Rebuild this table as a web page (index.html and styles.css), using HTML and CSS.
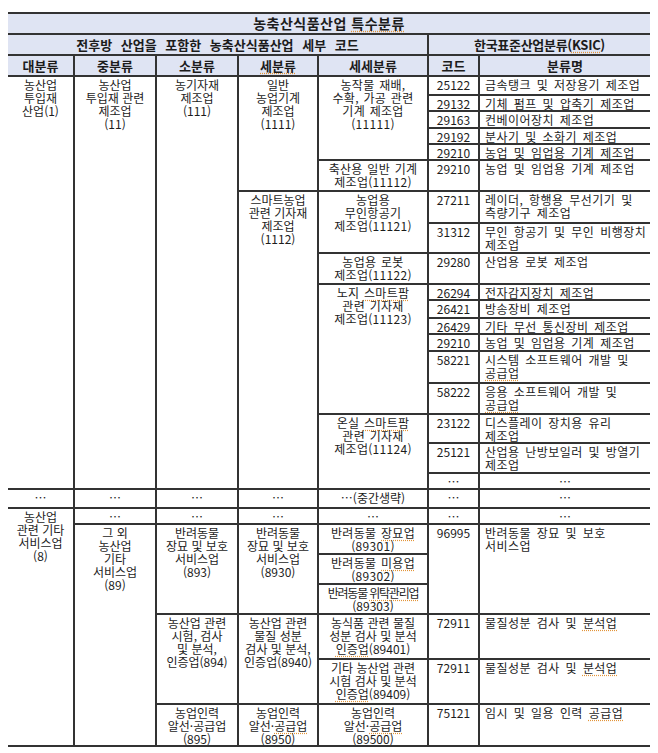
FILE: index.html
```html
<!DOCTYPE html>
<html lang="ko">
<head>
<meta charset="utf-8">
<title>농축산식품산업 특수분류</title>
<link rel="stylesheet" href="styles.css">
</head>
<body>
<table class="tbl">
  <colgroup>
    <col class="w1"><col class="w2"><col class="w3"><col class="w4"><col class="w5"><col class="w6"><col class="w7">
  </colgroup>
  <thead>
    <tr class="hr"><th colspan="7" class="title">농축산식품산업 <span class="sp">특수분류</span></th></tr>
    <tr class="hr"><th colspan="5" class="hd2">전후방 산업을 포함한 농축산식품산업 세부 코드</th><th colspan="2" class="hd2b">한국표준산업분류(<span class="sp">KSIC</span>)</th></tr>
    <tr class="hr hd3"><th>대분류</th><th>중분류</th><th>소분류</th><th><span class="sp">세분류</span></th><th>세세분류</th><th>코드</th><th>분류명</th></tr>
  </thead>
  <tbody>
    <tr class="h19">
      <td rowspan="18">농산업<br>투입재<br>산업(1)</td>
      <td rowspan="18">농산업<br>투입재 관련<br>제조업<br>(11)</td>
      <td rowspan="18">농기자재<br>제조업<br>(111)</td>
      <td rowspan="6">일반<br>농업기계<br>제조업<br>(1111)</td>
      <td rowspan="5" class="sub">농작물 재배,<br>수확, 가공 관련<br>기계 제조업<br>(11111)</td>
      <td class="code">25122</td><td class="name">금속탱크 및 저장용기 제조업</td>
    </tr>
    <tr class="h16"><td class="code">29132</td><td class="name">기체 펌프 및 압축기 제조업</td></tr>
    <tr class="h17"><td class="code">29163</td><td class="name">컨베이어장치 제조업</td></tr>
    <tr class="h16"><td class="code">29192</td><td class="name">분사기 및 소화기 제조업</td></tr>
    <tr class="h16"><td class="code">29210</td><td class="name">농업 및 임업용 기계 제조업</td></tr>
    <tr class="h31">
      <td class="sub">축산용 일반 기계<br>제조업(11112)</td>
      <td class="code">29210</td><td class="name">농업 및 임업용 기계 제조업</td>
    </tr>
    <tr class="h32">
      <td rowspan="12">스마트농업<br>관련 기자재<br>제조업<br>(1112)</td>
      <td rowspan="2" class="sub">농업용<br>무인항공기<br>제조업(11121)</td>
      <td class="code">27211</td><td class="name">레이더, 항행용 무선기기 및<br>측량기구 제조업</td>
    </tr>
    <tr class="h30"><td class="code">31312</td><td class="name">무인 항공기 및 무인 비행장치<br>제조업</td></tr>
    <tr class="h31">
      <td class="sub">농업용 로봇<br>제조업(11122)</td>
      <td class="code">29280</td><td class="name">산업용 로봇 제조업</td>
    </tr>
    <tr class="h16">
      <td rowspan="6" class="sub">노지 <span class="sp">스마트팜</span><br>관련 기자재<br>제조업(11123)</td>
      <td class="code">26294</td><td class="name">전자감지장치 제조업</td>
    </tr>
    <tr class="h18"><td class="code">26421</td><td class="name">방송장비 제조업</td></tr>
    <tr class="h16"><td class="code">26429</td><td class="name">기타 무선 통신장비 제조업</td></tr>
    <tr class="h17"><td class="code">29210</td><td class="name">농업 및 임업용 기계 제조업</td></tr>
    <tr class="h32"><td class="code">58221</td><td class="name">시스템 소프트웨어 개발 및<br><span class="sp">공급업</span></td></tr>
    <tr class="h31"><td class="code">58222</td><td class="name">응용 소프트웨어 개발 및<br><span class="sp">공급업</span></td></tr>
    <tr class="h29">
      <td rowspan="3" class="sub">온실 <span class="sp">스마트팜</span><br>관련 기자재<br>제조업(11124)</td>
      <td class="code">23122</td><td class="name">디스플레이 장치용 유리<br>제조업</td>
    </tr>
    <tr class="h30"><td class="code">25121</td><td class="name">산업용 난방보일러 및 방열기<br>제조업</td></tr>
    <tr class="h16"><td class="code">…</td><td class="code">…</td></tr>
    <tr class="h19 sect">
      <td>…</td><td>…</td><td>…</td><td>…</td><td>…(중간생략)</td><td class="code">…</td><td class="code">…</td>
    </tr>
    <tr class="h16">
      <td rowspan="7">농산업<br>관련 기타<br>서비스업<br>(8)</td>
      <td>…</td><td>…</td><td>…</td><td>…</td><td class="code">…</td><td class="code">…</td>
    </tr>
    <tr class="h30">
      <td rowspan="6">그 외<br>농산업<br>기타<br>서비스업<br>(89)</td>
      <td rowspan="3">반려동물<br>장묘 및 보호<br>서비스업<br>(893)</td>
      <td rowspan="3">반려동물<br>장묘 및 보호<br>서비스업<br>(8930)</td>
      <td class="sub">반려동물 <span class="sp">장묘업</span><br>(89301)</td>
      <td rowspan="3" class="code">96995</td>
      <td rowspan="3" class="name">반려동물 장묘 및 보호<br>서비스업</td>
    </tr>
    <tr class="h30"><td class="sub">반려동물 <span class="sp">미용업</span><br>(89302)</td></tr>
    <tr class="h30"><td><span class="tight">반려동물 <span class="sp">위탁관리업</span></span><br>(89303)</td></tr>
    <tr class="h45">
      <td rowspan="2">농산업 관련<br>시험, 검사<br>및 분석,<br>인증업(894)</td>
      <td rowspan="2">농산업 관련<br>물질 성분<br>검사 및 분석,<br>인증업(8940)</td>
      <td>농식품 관련 물질<br>성분 검사 및 분석<br><span class="sp">인증업</span>(89401)</td>
      <td class="code">72911</td><td class="name">물질성분 검사 및 <span class="sp">분석업</span></td>
    </tr>
    <tr class="h45">
      <td>기타 농산업 관련<br>시험 검사 및 분석<br><span class="sp">인증업</span>(89409)</td>
      <td class="code">72911</td><td class="name">물질성분 검사 및 <span class="sp">분석업</span></td>
    </tr>
    <tr class="h42">
      <td>농업인력<br>알선·공급업<br>(895)</td>
      <td>농업인력<br>알선·<span class="sp">공급업</span><br>(8950)</td>
      <td>농업인력<br>알선·<span class="sp">공급업</span><br>(89500)</td>
      <td class="code">75121</td><td class="name">임시 및 일용 인력 <span class="sp">공급업</span></td>
    </tr>
  </tbody>
</table>
</body>
</html>
```

FILE: styles.css
```css
body {
  margin: 12px 8px 0;
  background: #ffffff;
  color: #1c1c1c;
  font-family: "Noto Sans CJK KR", "Noto Sans", sans-serif;
}

.tbl {
  width: 642px;
  border-collapse: collapse;
  table-layout: fixed;
  font-size: 12px;
  line-height: 13px;
  border-top: 2px solid #222;
  border-bottom: 2px solid #222;
  border-left: hidden;
  border-right: hidden;
}

.w1 { width: 66px; }
.w2 { width: 82px; }
.w3 { width: 82px; }
.w4 { width: 80px; }
.w5 { width: 110px; }
.w6 { width: 51px; }
.w7 { width: 171px; }

.tbl td,
.tbl th {
  border: 2px solid #333;
  padding: 1px 1px 0;
  vertical-align: top;
  text-align: center;
  overflow: hidden;
  white-space: nowrap;
}

.tbl th {
  background: #dfe4f3;
  font-weight: bold;
  vertical-align: middle;
  padding: 0;
}

.hr { height: 21px; }

.title { font-size: 14px; letter-spacing: 0.5px; }
.hd2 { font-size: 13px; word-spacing: 5px; }
.hd2b { font-size: 13px; letter-spacing: -0.3px; }
.hd3 th { font-size: 13px; }

.code { text-align: center; }
.tbl td.name {
  text-align: left;
  padding-left: 5px;
  letter-spacing: 0.45px;
  word-spacing: 2px;
}
.tbl td.sub { letter-spacing: 0.3px; word-spacing: 1px; }

.tight { letter-spacing: -1.2px; }

.sect td { border-top-width: 2px; border-bottom-width: 2px; }

.sp {
  text-decoration: underline dotted #e39438;
  text-underline-offset: 2px;
}

.h16 { height: 16px; }
.h17 { height: 17px; }
.h18 { height: 18px; }
.h19 { height: 19px; }
.h29 { height: 29px; }
.h30 { height: 30px; }
.h31 { height: 31px; }
.h32 { height: 32px; }
.h42 { height: 42px; }
.h45 { height: 45px; }
```
